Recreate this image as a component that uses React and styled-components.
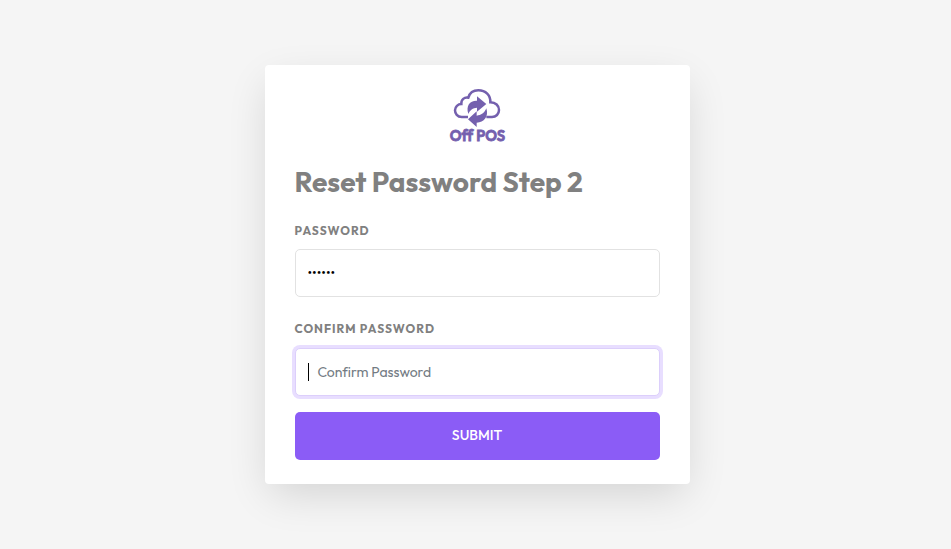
import React from "react";
import styled, { createGlobalStyle } from "styled-components";

const GlobalStyle = createGlobalStyle`
  * { box-sizing: border-box; }
  body {
    margin: 0;
    background: #f5f5f5;
    font-family: Outfit, Lato, "Open Sans", sans-serif;
  }
`;

const Page = styled.main`
  min-height: 549px;
  padding: 65px 0 0 265px;
`;

const Card = styled.form`
  width: 425px;
  height: 419px;
  padding: 23px 30px 24px;
  display: flex;
  flex-direction: column;
  background: #fff;
  border-radius: 4px;
  box-shadow: 0 14px 40px -5px rgba(0, 0, 0, 0.14);
`;

const Logo = styled.svg`
  width: 56px;
  height: 56px;
  align-self: center;
  flex: none;
  margin: 0 1px 19px 0;
  overflow: visible;
`;

const LogoText = styled.text`
  font: 600 48px Outfit, sans-serif;
  font-variant-ligatures: none;
  fill: #7460ae;
  stroke: #7460ae;
  stroke-width: 2.5px;
`;

const Title = styled.h1`
  margin: 0 0 0 -0.5px;
  height: 38px;
  line-height: 38px;
  font-size: 28px;
  font-weight: 700;
  color: #808080;
  white-space: nowrap;
`;

const Label = styled.label`
  display: block;
  height: 16px;
  line-height: 16px;
  margin-top: ${(p) => p.$top}px;
  margin-left: -0.5px;
  font-size: 12px;
  font-weight: 700;
  letter-spacing: 1px;
  color: #808080;
  text-transform: uppercase;
`;

const Field = styled.div`
  height: 48px;
  flex: none;
  margin-top: ${(p) => p.$top}px;
  padding: 0 12px;
  display: flex;
  align-items: center;
  border: 1px solid ${(p) => (p.$focused ? "#dccffb" : "#e2e2e2")};
  border-radius: 5px;
  background: #fff;
  box-shadow: ${(p) => (p.$focused ? "0 0 0 3px #e8deff" : "none")};
`;

const PasswordInput = styled.input`
  width: 100%;
  margin-left: -0.5px;
  padding: 0;
  border: 0;
  outline: 0;
  background: transparent;
  color: #000;
  font: 400 14px Outfit, Lato, sans-serif;
`;

const Caret = styled.span`
  width: 1px;
  height: 18px;
  margin-right: 8.5px;
  background: #000;
`;

const Placeholder = styled.span`
  font-size: 14px;
  font-weight: 400;
  letter-spacing: -0.04px;
  color: #737b83;
`;

const Submit = styled.button`
  height: 48px;
  flex: none;
  margin-top: 16px;
  padding: 0 1px 2px 0;
  border: 0;
  border-radius: 5px;
  background: #8b5cf6;
  color: #fff;
  font: 500 14px Outfit, Lato, sans-serif;
`;

function OffPosLogo() {
  return (
    <Logo viewBox="36 24 168 168" aria-label="Off POS">
      <path
        d="M93 111H74C61 111 54 101 54 91C54 80 63 72 73 72C72 58 82 51 94 53C98 39 110 31 124 31C146 31 161 46 160 67C176 67 186 77 186 90C186 102 177 111 165 111H148"
        fill="none"
        stroke="#7460ae"
        strokeWidth="7.5"
      />
      <path d="M94 102C86 76 99 61 120 62V49L148 72L120 95V83C108 84 98 90 94 102Z" fill="#7460ae" />
      <path d="M148 85C156 110 141 128 119 128V141L93 118L119 94V107C132 106 143 98 148 85Z" fill="#7460ae" />
      <LogoText x="38" y="182" textLength="166" lengthAdjust="spacingAndGlyphs">
        Off POS
      </LogoText>
    </Logo>
  );
}

export default function App() {
  return (
    <>
      <GlobalStyle />
      <Page>
        <Card>
          <OffPosLogo />
          <Title>Reset Password Step 2</Title>
          <Label $top={22}>Password</Label>
          <Field $top={10}>
            <PasswordInput type="password" defaultValue="123456" />
          </Field>
          <Label $top={24}>Confirm Password</Label>
          <Field $top={11} $focused>
            <Caret />
            <Placeholder>Confirm Password</Placeholder>
          </Field>
          <Submit type="button">SUBMIT</Submit>
        </Card>
      </Page>
    </>
  );
}
